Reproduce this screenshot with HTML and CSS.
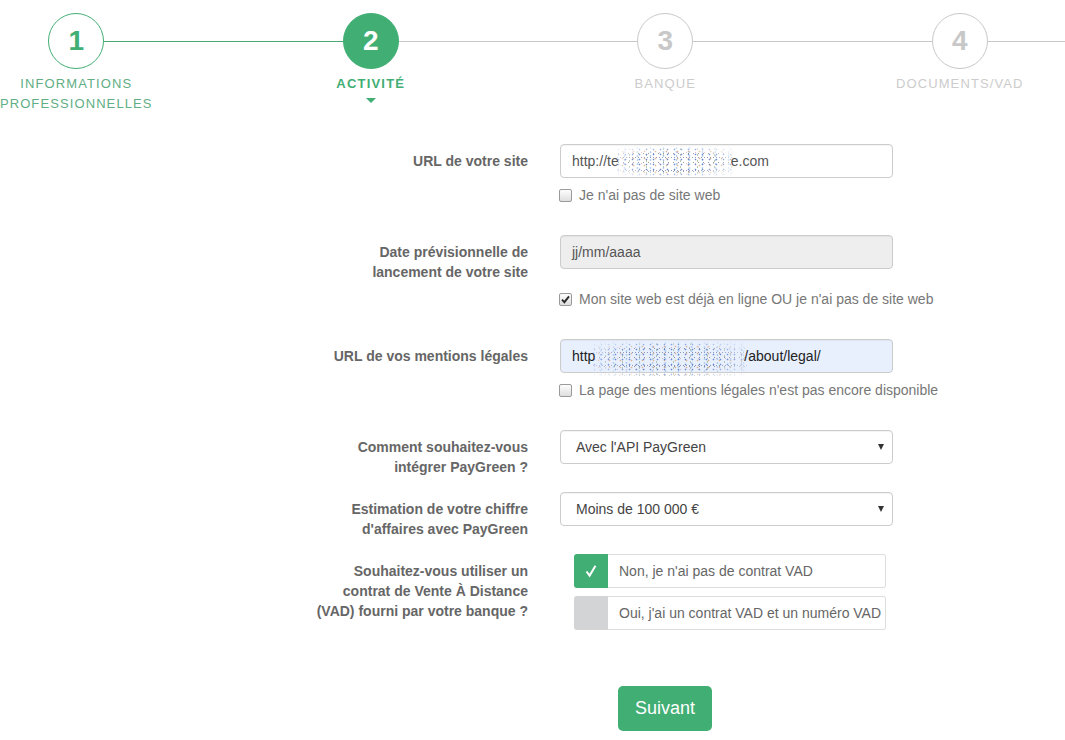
FILE: index.html
```html
<!DOCTYPE html>
<html lang="fr">
<head>
<meta charset="utf-8">
<title>Activité</title>
<link rel="stylesheet" href="styles.css">
</head>
<body>
<div class="steps">
  <div class="step done">
    <div class="step-top">
      <span class="seg seg-none"></span>
      <span class="circle">1</span>
      <span class="seg seg-green"></span>
    </div>
    <div class="step-label">INFORMATIONS<br>PROFESSIONNELLES</div>
  </div>
  <div class="step active">
    <div class="step-top">
      <span class="seg seg-green"></span>
      <span class="circle">2</span>
      <span class="seg seg-grey"></span>
    </div>
    <div class="step-label">ACTIVITÉ</div>
    <span class="caret"></span>
  </div>
  <div class="step todo">
    <div class="step-top">
      <span class="seg seg-grey"></span>
      <span class="circle">3</span>
      <span class="seg seg-grey"></span>
    </div>
    <div class="step-label">BANQUE</div>
  </div>
  <div class="step todo">
    <div class="step-top">
      <span class="seg seg-grey"></span>
      <span class="circle">4</span>
      <span class="seg seg-grey"></span>
    </div>
    <div class="step-label">DOCUMENTS/VAD</div>
  </div>
</div>

<form class="form">
  <div class="group">
    <label class="label">URL de votre site</label>
    <div class="control"><div class="input">http://te<span class="noise noise-a"></span>e.com</div></div>
  </div>
  <div class="check-row"><span class="cb"></span><span>Je n'ai pas de site web</span></div>

  <div class="group g-gap30">
    <label class="label">Date prévisionnelle de lancement de votre site</label>
    <div class="control"><div class="input input-disabled">jj/mm/aaaa</div></div>
  </div>
  <div class="check-row"><span class="cb cb-checked"><svg viewBox="0 0 11 11" width="11" height="11"><path d="M2 5.6 L4.4 8.2 L9 2.4" fill="none" stroke="#2b2b2b" stroke-width="1.9"/></svg></span><span>Mon site web est déjà en ligne OU je n'ai pas de site web</span></div>

  <div class="group g-gap30">
    <label class="label">URL de vos mentions légales</label>
    <div class="control"><div class="input input-auto">http<span class="noise noise-b"></span>/about/legal/</div></div>
  </div>
  <div class="check-row"><span class="cb"></span><span>La page des mentions légales n'est pas encore disponible</span></div>

  <div class="group g-gap30">
    <label class="label">Comment souhaitez-vous intégrer PayGreen ?</label>
    <div class="control"><div class="select"><span>Avec l'API PayGreen</span><span class="sel-caret"></span></div></div>
  </div>

  <div class="group g-gap15">
    <label class="label">Estimation de votre chiffre d'affaires avec PayGreen</label>
    <div class="control"><div class="select"><span>Moins de 100 000 €</span><span class="sel-caret"></span></div></div>
  </div>

  <div class="group g-gap15">
    <label class="label">Souhaitez-vous utiliser un contrat de Vente À Distance (VAD) fourni par votre banque ?</label>
    <div class="control">
      <div class="vad-list">
        <div class="vad-opt">
          <span class="vad-mark vad-on"><svg viewBox="0 0 12 14" width="12" height="14"><path d="M1.5 7.5 L4.6 11.6 L10.5 1.8" fill="none" stroke="#fff" stroke-width="2"/></svg></span>
          <span class="vad-text">Non, je n'ai pas de contrat VAD</span>
        </div>
        <div class="vad-opt">
          <span class="vad-mark vad-off"></span>
          <span class="vad-text">Oui, j'ai un contrat VAD et un numéro VAD</span>
        </div>
      </div>
    </div>
  </div>

  <div class="actions"><button type="button" class="btn">Suivant</button></div>
</form>
</body>
</html>
```

FILE: styles.css
```css
html, body {
  margin: 0;
  padding: 0;
  background: #fff;
  overflow: hidden;
}
body {
  font-family: "Liberation Sans", Arial, sans-serif;
  font-size: 14px;
  color: #555;
  width: 1065px;
  height: 740px;
}

/* Stepper */
.steps {
  display: flex;
  align-items: flex-start;
  width: 1178px;
  margin-left: -71px;
  padding-top: 13px;
  height: 101px;
}
.step {
  width: 294.5px;
  display: flex;
  flex-direction: column;
  align-items: center;
}
.step-top {
  display: flex;
  align-items: center;
  width: 100%;
  height: 56px;
}
.seg {
  flex: 1;
  height: 1px;
}
.seg-green { background: #4aa873; }
.seg-grey { background: #c8c8c8; }
.seg-none { background: transparent; }
.circle {
  width: 54px;
  height: 54px;
  border-radius: 50%;
  border: 1px solid #c8c8c8;
  display: flex;
  align-items: center;
  justify-content: center;
  font-weight: bold;
  font-size: 28px;
  color: #c8c8c8;
  box-sizing: content-box;
}
.step-label {
  margin-top: 5px;
  font-size: 13px;
  line-height: 20px;
  letter-spacing: 1.1px;
  text-align: center;
  color: #cccccc;
  white-space: nowrap;
}
.done .circle {
  border-color: #41ae74;
  color: #41ae74;
}
.done .step-label { color: #5fae84; }
.active .circle {
  background: #41ae74;
  border-color: #41ae74;
  color: #fff;
}
.active .step-label {
  color: #41ae74;
  font-weight: bold;
  letter-spacing: 1.2px;
}
.caret {
  margin-top: 4px;
  width: 0;
  height: 0;
  border-left: 5px solid transparent;
  border-right: 5px solid transparent;
  border-top: 5px solid #41ae74;
}

/* Form */
.form {
  margin: 30px 0 0 315px;
  width: 700px;
}
.group {
  display: flex;
  align-items: flex-start;
  gap: 32px;
}
.g-gap30 { margin-top: 30px; }
.g-gap15 { margin-top: 15px; }
.label {
  width: 213px;
  flex: none;
  padding-top: 7px;
  text-align: right;
  font-weight: bold;
  color: #666;
  line-height: 20px;
}
.control {
  width: 333px;
  flex: none;
}
.input, .select {
  box-sizing: border-box;
  height: 34px;
  border: 1px solid #ccc;
  border-radius: 4px;
  padding: 0 11px;
  line-height: 32px;
  color: #555;
  background: #fff;
  white-space: nowrap;
  box-shadow: inset 0 1px 1px rgba(0,0,0,.05);
}
.input-disabled { background: #eeeeee; }
.input-auto {
  background: #e8f0fe;
  color: #222;
}
.noise {
  display: inline-block;
  vertical-align: top;
  margin-top: 2px;
  height: 29px;
  background:
    radial-gradient(circle, rgba(70,110,200,.8) 0.7px, transparent 1.1px) 0 0 / 7px 5px,
    radial-gradient(circle, rgba(215,150,90,.7) 0.7px, transparent 1.1px) 2px 1px / 11px 7px,
    radial-gradient(circle, rgba(100,100,110,.65) 0.6px, transparent 1px) 1px 2px / 5px 9px,
    radial-gradient(circle, rgba(150,190,230,.7) 0.8px, transparent 1.2px) 3px 3px / 13px 4px,
    radial-gradient(circle, rgba(200,120,160,.5) 0.6px, transparent 1px) 4px 0 / 9px 11px,
    radial-gradient(circle, rgba(120,150,90,.5) 0.6px, transparent 1px) 6px 5px / 17px 6px,
    radial-gradient(circle, rgba(60,80,140,.55) 0.6px, transparent 1px) 1px 4px / 3px 13px;
  -webkit-mask-image: radial-gradient(ellipse at center, #000 50%, rgba(0,0,0,.35) 75%, transparent 100%);
  mask-image: radial-gradient(ellipse at center, #000 50%, rgba(0,0,0,.35) 75%, transparent 100%);
}
.noise-a { width: 118px; margin-left: -4px; margin-right: -2px; }
.noise-b { width: 156px; margin-left: -4px; margin-right: -3px; height: 34px; }

.select {
  display: flex;
  align-items: center;
  justify-content: space-between;
  padding: 0 8px 0 15px;
  color: #444;
}
.sel-caret {
  width: 0;
  height: 0;
  border-left: 3px solid transparent;
  border-right: 3px solid transparent;
  border-top: 6px solid #333;
}

.check-row {
  margin-top: 7px;
  padding-left: 244px;
  display: flex;
  align-items: center;
  gap: 7px;
  height: 20px;
  line-height: 20px;
  color: #777;
  white-space: nowrap;
}
.cb {
  box-sizing: border-box;
  width: 13px;
  height: 13px;
  border: 1px solid #9a9a9a;
  border-radius: 2px;
  background: linear-gradient(#fdfdfd, #dedede);
  display: flex;
  align-items: center;
  justify-content: center;
}
.cb svg { display: block; }

.vad-list {
  margin-left: 14px;
  width: 312px;
  display: flex;
  flex-direction: column;
  gap: 8px;
}
.vad-opt {
  display: flex;
  height: 34px;
}
.vad-mark {
  width: 34px;
  height: 34px;
  flex: none;
  border-radius: 3px 0 0 3px;
  display: flex;
  align-items: center;
  justify-content: center;
}
.vad-on { background: #41ae74; }
.vad-off { background: #d3d4d5; }
.vad-text {
  flex: 1;
  box-sizing: border-box;
  border: 1px solid #dddddd;
  border-left: none;
  border-radius: 0 3px 3px 0;
  padding-left: 11px;
  line-height: 32px;
  color: #666;
  white-space: nowrap;
  overflow: hidden;
}

.actions {
  margin-top: 56px;
  padding-left: 303px;
}
.btn {
  height: 45px;
  width: 94px;
  padding: 0;
  border: none;
  border-radius: 5px;
  background: #41ae74;
  color: #fff;
  font-family: "Liberation Sans", Arial, sans-serif;
  font-size: 18px;
  cursor: pointer;
}
```
